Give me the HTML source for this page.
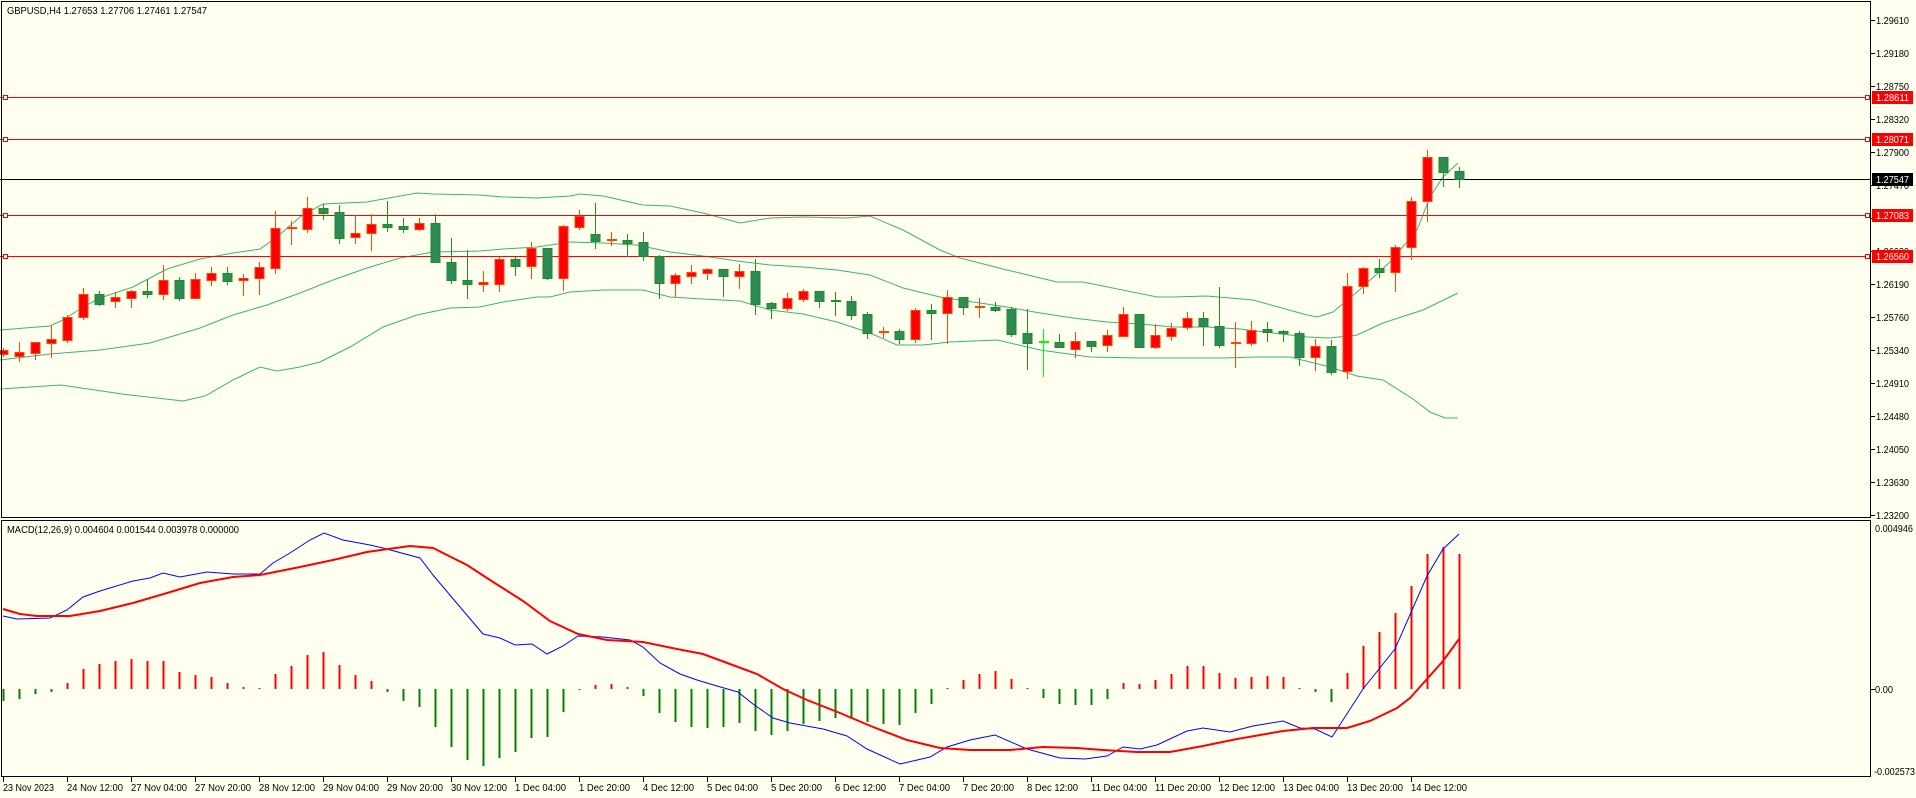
<!DOCTYPE html>
<html><head><meta charset="utf-8">
<style>
html,body{margin:0;padding:0;background:#fffff0;}
body{width:1916px;height:798px;overflow:hidden;position:relative;font-family:"Liberation Sans",sans-serif;}
svg{position:absolute;left:0;top:0;}
text{font-family:"Liberation Sans",sans-serif;font-size:10px;fill:#000;}
</style></head><body>
<svg id="s" width="1916" height="798" xmlns="http://www.w3.org/2000/svg">
<rect x="0" y="0" width="1916" height="798" fill="#fffff0"/>
<g id="bb" fill="none" stroke="#3cb371" stroke-width="1">
<polyline points="0,330 50,326 63,320 83,307 100,298 133,287 167,269 200,259 233,253 260,249 277,237 300,217 323,204 367,202 417,193 433,194 480,195 503,197 537,198 570,196 580,194 603,196 643,205 670,206 703,213 740,223 770,218 803,217 847,218 870,216 903,230 940,250 960,258 1007,270 1057,282 1083,282 1157,297 1173,297 1207,296 1253,300 1307,315 1317,317 1333,312 1357,292 1390,262 1417,230 1430,197 1443,177 1458,163"/>
<polyline points="0,360 50,354 100,350 150,343 180,334 200,328 233,315 267,305 300,293 333,280 367,268 400,258 433,252 480,251 503,249 537,247 570,242 603,243 637,245 670,252 703,256 737,261 770,265 803,267 837,270 870,275 903,288 940,297 973,302 1007,307 1040,313 1073,318 1107,322 1140,324 1173,327 1207,327 1240,329 1273,333 1307,337 1330,338 1357,335 1383,323 1423,310 1458,293"/>
<polyline points="0,389 61,385 122,394 183,401 205,396 233,380 260,367 277,371 300,367 320,362 350,347 383,327 417,315 450,308 480,307 503,302 537,297 550,297 570,292 603,290 643,290 670,297 703,299 740,301 770,310 803,314 837,322 870,333 897,345 923,345 950,342 997,340 1040,350 1090,357 1140,358 1223,358 1257,357 1290,357 1330,367 1357,376 1383,380 1413,399 1430,412 1445,418 1458,418"/>
</g>
<g stroke="#ff0000" stroke-width="1">
<line x1="0" y1="97.5" x2="1871" y2="97.5"/>
<line x1="0" y1="139.5" x2="1871" y2="139.5"/>
<line x1="0" y1="215.5" x2="1871" y2="215.5"/>
<line x1="0" y1="256.5" x2="1871" y2="256.5"/>
</g>
<line x1="0" y1="179.5" x2="1871" y2="179.5" stroke="#000" stroke-width="1"/>
<g fill="#fffff0" stroke="#ff0000" stroke-width="1">
<rect x="3.5" y="95.5" width="4" height="4"/><rect x="1865.5" y="95.5" width="4" height="4"/>
<rect x="3.5" y="137.5" width="4" height="4"/><rect x="1865.5" y="137.5" width="4" height="4"/>
<rect x="3.5" y="213.5" width="4" height="4"/><rect x="1865.5" y="213.5" width="4" height="4"/>
<rect x="3.5" y="254.5" width="4" height="4"/><rect x="1865.5" y="254.5" width="4" height="4"/>
</g>
<g id="candles"></g>
<g id="hist"></g>
<polyline fill="none" stroke="#0000ff" stroke-width="1" points="3,616 17,619 50,618 67,610 83,597 100,591 133,581 150,578 163,573 180,577 207,572 233,574 260,574 273,563 290,553 310,540 324,533 343,540 370,545 383,548 420,558 433,575 460,607 483,634 500,638 515,645 532,644 547,654 563,646 578,636 603,637 630,640 643,647 660,663 680,674 697,680 717,686 738,692 753,704 773,718 790,723 823,729 847,736 867,749 900,764 930,757 947,747 970,740 995,735 1027,749 1060,758 1085,759 1107,756 1123,747 1140,749 1157,745 1187,731 1203,728 1230,732 1253,726 1283,721 1300,728 1315,729 1332,737 1363,689 1395,649 1427,576 1443,549 1459,534"/>
<polyline fill="none" stroke="#ff0000" stroke-width="2" points="3,609 20,614 37,616 70,616 100,611 133,603 167,593 200,583 233,577 260,575 300,567 333,560 367,552 410,546 433,548 467,565 490,580 523,601 550,621 578,634 607,640 643,642 677,649 703,654 730,664 757,674 783,689 807,700 840,713 873,727 907,740 940,748 970,750 1010,750 1043,747 1077,748 1103,750 1137,752 1170,752 1203,746 1237,739 1283,731 1313,728 1347,728 1370,721 1397,708 1410,698 1427,679 1443,661 1459,639"/>
<g fill="none" stroke="#000" stroke-width="1">
<rect x="1.5" y="1.5" width="1869" height="516"/>
<rect x="1.5" y="520.5" width="1869" height="256"/>
</g>
<g id="ticks" stroke="#000" stroke-width="1"></g>
<text x="7" y="14" textLength="200" lengthAdjust="spacingAndGlyphs">GBPUSD,H4  1.27653 1.27706 1.27461 1.27547</text>
<text x="7" y="533" textLength="232" lengthAdjust="spacingAndGlyphs">MACD(12,26,9) 0.004604 0.001544 0.003978 0.000000</text>
<g id="pl">
<text x="1876" y="24">1.29610</text>
<text x="1876" y="57">1.29180</text>
<text x="1876" y="90">1.28750</text>
<text x="1876" y="123">1.28320</text>
<text x="1876" y="156">1.27900</text>
<text x="1876" y="189">1.27470</text>
<text x="1876" y="222">1.27040</text>
<text x="1876" y="255">1.26630</text>
<text x="1876" y="288">1.26190</text>
<text x="1876" y="321">1.25760</text>
<text x="1876" y="354">1.25340</text>
<text x="1876" y="387">1.24910</text>
<text x="1876" y="420">1.24480</text>
<text x="1876" y="453">1.24050</text>
<text x="1876" y="486">1.23630</text>
<text x="1876" y="519">1.23200</text>
</g>
<rect x="1872" y="91" width="41" height="13" fill="#ff0000"/><text class="p" x="1876" y="101" style="fill:#fff">1.28611</text>
<rect x="1872" y="133" width="41" height="13" fill="#ff0000"/><text class="p" x="1876" y="143" style="fill:#fff">1.28071</text>
<rect x="1872" y="173" width="41" height="13" fill="#000"/><text class="p" x="1876" y="183" style="fill:#fff">1.27547</text>
<rect x="1872" y="209" width="41" height="13" fill="#ff0000"/><text class="p" x="1876" y="219" style="fill:#fff">1.27083</text>
<rect x="1872" y="250" width="41" height="13" fill="#ff0000"/><text class="p" x="1876" y="260" style="fill:#fff">1.26560</text>
<text x="1875" y="532" textLength="38" lengthAdjust="spacingAndGlyphs">0.004946</text>
<text x="1875" y="693" textLength="18" lengthAdjust="spacingAndGlyphs">0.00</text>
<text x="1874" y="775" textLength="41" lengthAdjust="spacingAndGlyphs">-0.002573</text>
<g id="dates">
<text x="3" y="791">23 Nov 2023</text>
<text x="67" y="791">24 Nov 12:00</text>
<text x="131" y="791">27 Nov 04:00</text>
<text x="195" y="791">27 Nov 20:00</text>
<text x="259" y="791">28 Nov 12:00</text>
<text x="323" y="791">29 Nov 04:00</text>
<text x="387" y="791">29 Nov 20:00</text>
<text x="451" y="791">30 Nov 12:00</text>
<text x="515" y="791">1 Dec 04:00</text>
<text x="579" y="791">1 Dec 20:00</text>
<text x="643" y="791">4 Dec 12:00</text>
<text x="707" y="791">5 Dec 04:00</text>
<text x="771" y="791">5 Dec 20:00</text>
<text x="835" y="791">6 Dec 12:00</text>
<text x="899" y="791">7 Dec 04:00</text>
<text x="963" y="791">7 Dec 20:00</text>
<text x="1027" y="791">8 Dec 12:00</text>
<text x="1091" y="791">11 Dec 04:00</text>
<text x="1155" y="791">11 Dec 20:00</text>
<text x="1219" y="791">12 Dec 12:00</text>
<text x="1283" y="791">13 Dec 04:00</text>
<text x="1347" y="791">13 Dec 20:00</text>
<text x="1411" y="791">14 Dec 12:00</text>
</g>
</svg>
<script>
var C=[
['r',350,354,348,356],['r',352,356,342,361],['r',342,353,342,359],['r',339,343,325,357],['r',317,340,315,342],
['r',294,317,288,319],['g',294,304,291,305],['r',297,301,292,307],['r',291,298,290,307],['g',291,294,279,297],
['r',280,294,265,299],['g',280,298,277,300],['r',279,298,273,298],['r',273,280,267,285],['g',273,281,267,284],
['r',278,280,274,295],['r',267,278,262,294],['r',228,268,211,273],['r',228,228,221,244],['r',208,229,197,232],
['g',208,213,204,219],['g',212,238,205,243],['r',233,237,215,243],['r',224,233,214,250],['g',224,227,201,231],
['g',226,229,218,232],['r',223,229,218,230],['g',223,262,214,262],['g',262,280,238,283],['g',280,284,250,298],
['r',282,284,271,291],['r',259,284,257,291],['g',259,266,257,275],['r',248,266,242,278],['g',248,278,248,279],
['r',226,278,225,290],['r',216,227,210,229],['g',234,241,203,248],['r',240,240,232,245],['g',240,243,234,256],
['g',242,256,232,260],['g',256,283,255,298],['r',275,283,273,296],['r',272,276,265,283],['r',269,273,268,279],
['g',269,276,269,296],['r',271,276,264,288],['g',271,304,259,314],['g',303,308,302,318],['r',298,308,293,310],
['r',291,299,289,301],['g',291,301,291,307],['g',301,301,292,315],['g',301,315,296,319],['g',314,333,312,338],
['r',332,332,327,337],['g',331,339,329,343],['r',310,339,308,342],['g',310,313,304,339],['r',297,313,290,343],
['g',297,307,297,314],['r',307,307,298,317],['g',307,310,302,311],['g',309,334,307,336],['g',333,343,309,369],
['l',342,342,329,376],['g',342,347,334,347],['r',341,349,332,357],['g',341,346,341,351],['r',335,345,330,351],
['r',314,336,307,336],['g',314,347,314,347],['r',335,347,324,348],['r',328,336,323,340],['r',318,327,312,329],
['g',318,326,312,345],['g',326,345,287,347],['r',343,343,322,367],['r',330,343,321,345],['g',329,332,322,341],
['g',331,333,330,341],['g',333,357,331,365],['r',346,357,339,370],['g',346,372,340,374],['r',286,371,273,378],
['r',268,286,267,293],['g',268,272,259,277],['r',247,272,245,291],['r',201,247,197,259],['r',157,201,150,221],
['g',157,172,157,186],['g',171,179,167,187]];
var H=[-12,-10,-5,-3,6,20,25,28,30,28,28,17,14,12,6,2,1,15,23,34,37,24,14,8,-3,-12,-18,-38,-58,-71,-77,-69,-63,-49,-48,-23,-1,4,5,2,-7,-24,-33,-38,-39,-38,-34,-42,-46,-42,-35,-32,-29,-30,-33,-35,-36,-24,-15,1,9,15,18,10,1,-9,-15,-16,-16,-10,6,5,9,15,23,23,16,11,12,13,12,1,-3,-13,16,43,57,76,103,135,142,135];
var NS='http://www.w3.org/2000/svg';
function el(p,n,a){var e=document.createElementNS(NS,n);for(var k in a)e.setAttribute(k,a[k]);p.appendChild(e);return e;}
var g=document.getElementById('candles');
C.forEach(function(c,i){
 var x=3+16*i, t=c[0];
 var sc=t=='r'?'#ff4500':(t=='l'?'#00ff00':'#228b22');
 var fc=t=='r'?'#ff0000':(t=='l'?'#00ff00':'#2e8b57');
 el(g,'line',{x1:x+.5,y1:c[3],x2:x+.5,y2:c[4]+1,stroke:sc,'stroke-width':1});
 if(c[2]-c[1]<2){el(g,'rect',{x:x-4,y:c[1]-1,width:10,height:2,fill:sc});}
 else el(g,'rect',{x:x-4,y:c[1]+.5,width:9,height:c[2]-c[1],fill:fc,stroke:sc,'stroke-width':1});
});
var h=document.getElementById('hist');
H.forEach(function(v,i){
 var x=3+16*i; var y=v>0?689-v:689; var hh=Math.max(Math.abs(v),1);
 el(h,'rect',{x:x-.5,y:y,width:2,height:hh,fill:v>0?'#ff0000':'#008000'});
});
var tk=document.getElementById('ticks');
[20,53,86,119,152,185,218,251,284,317,350,383,416,449,482,515,689].forEach(function(y){el(tk,'line',{x1:1871,y1:y+.5,x2:1875,y2:y+.5});});
for(var i=0;i<23;i++){var x=3+64*i;el(tk,'line',{x1:x+.5,y1:777,x2:x+.5,y2:782});}
document.querySelectorAll('#pl text, text.p').forEach(function(t){t.setAttribute('textLength','33');t.setAttribute('lengthAdjust','spacingAndGlyphs');});
document.querySelectorAll('#dates text').forEach(function(t){var n=t.textContent.length;t.setAttribute('textLength',String(Math.round(n*4.67)));t.setAttribute('lengthAdjust','spacingAndGlyphs');});
</script>
</body></html>
